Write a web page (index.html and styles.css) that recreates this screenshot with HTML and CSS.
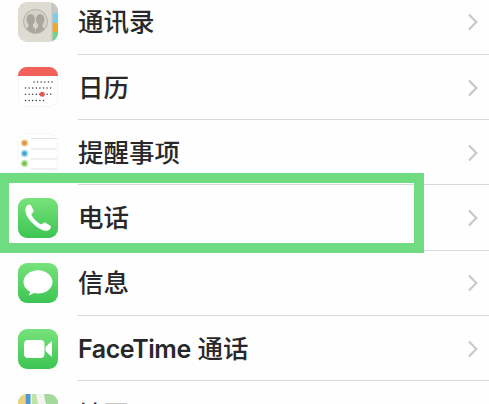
FILE: index.html
```
<!DOCTYPE html>
<html lang="zh-CN">
<head>
<meta charset="utf-8">
<title>设置</title>
<link rel="stylesheet" href="styles.css">
</head>
<body>
<svg class="defs" aria-hidden="true">
  <defs>
    <linearGradient id="green" x1="0" y1="0" x2="0" y2="1"><stop offset="0" stop-color="#78e27b"/><stop offset="1" stop-color="#3cc553"/></linearGradient>
    <clipPath id="tile"><rect width="40" height="40" rx="9"/></clipPath>
    <clipPath id="portrait"><circle cx="17.5" cy="19.5" r="11.5"/></clipPath>
    <symbol id="chevron" viewBox="0 0 12 18"><path d="M2 1.5 9.3 9 2 16.5" fill="none" stroke="#c8c8cb" stroke-width="2.2"/></symbol>
  </defs>
</svg>
<main class="list">
  <div class="row">
    <svg class="icon" viewBox="0 0 40 40"><g clip-path="url(#tile)">
      <rect width="40" height="40" fill="#dedbd2"/>
      <path d="M34 0h6v12h-6z" fill="#c9c7c5"/><path d="M34.5 11h5.5v10h-5.5z" fill="#7ccdec"/><path d="M34.5 21h5.5v9h-5.5z" fill="#f2a72c"/><path d="M34.5 30h5.5v10h-5.5z" fill="#70d587"/>
      <path d="M34 0v40" stroke="#c2beb5" stroke-width="1"/>
      <circle cx="17.5" cy="19.5" r="12" fill="#d6d3ca" stroke="#b4b0a8" stroke-width="1"/>
      <g fill="#aaa69f" clip-path="url(#portrait)"><ellipse cx="12.8" cy="17.500" rx="4.200" ry="5.500"/><ellipse cx="22.200" cy="17.500" rx="4.200" ry="5.500"/><path d="M10.500 21h4.500v4q2.500 1 2.500 3v4H5c0-5 3-5 5.500-7z"/><path d="M20 21h4.500v4c2.500 2 5.500 2 5.500 7H17.900v-4q0-2 2.100-3z"/></g>
    </g></svg>
    <div class="body"><span class="label">通讯录</span><svg class="chevron"><use href="#chevron"/></svg></div>
  </div>
  <div class="row">
    <svg class="icon" viewBox="0 0 40 40">
      <rect x=".5" y=".5" width="39" height="39" rx="8.500" fill="#fff" stroke="#eee" stroke-width=".6"/>
      <path d="M0 9V8a9 9 0 0 1 9-8h22a9 9 0 0 1 9 8v1z" fill="#f06159"/>
      <g fill="none" stroke="#34383b" stroke-width="1.500" stroke-linecap="round" stroke-dasharray="0 3.600"><path d="M16 15h18.500M7.500 21h26M7.500 27.200h26M7.500 33.500h18.500"/></g>
      <circle cx="24.200" cy="27.200" r="2.500" fill="#e85850"/>
    </svg>
    <div class="body"><span class="label">日历</span><svg class="chevron"><use href="#chevron"/></svg></div>
  </div>
  <div class="row">
    <svg class="icon" viewBox="0 0 40 40">
      <rect x=".5" y=".5" width="39" height="39" rx="8.500" fill="#fff" stroke="#f0f0f0" stroke-width=".6"/>
      <path d="M13 5.500h26M13 16h26M13 26h26M13 36h26" stroke="#dedede" stroke-width=".9"/>
      <g stroke-width="1.500"><circle cx="6.500" cy="10" r="3" fill="#db9540" stroke="#f5d0a0"/><circle cx="6.500" cy="20.500" r="3" fill="#43a7d2" stroke="#a4dcf3"/><circle cx="6.500" cy="30.500" r="3" fill="#7dbd59" stroke="#c4eaaa"/></g>
    </svg>
    <div class="body"><span class="label">提醒事项</span><svg class="chevron"><use href="#chevron"/></svg></div>
  </div>
  <div class="row">
    <svg class="icon" viewBox="0 0 40 40"><rect width="40" height="40" rx="9" fill="url(#green)"/>
      <path d="M8.300 8.500c1-1.500 3-2.800 4.500-1.200l2.600 4.700c.8 1.600-.6 2.700-1.800 3.800-.7.800 1.200 4 3.800 6.500 2.400 2.300 5.500 4.500 6.600 3.900 1.200-1.200 2.300-2.200 3.900-1.200l4.200 2.500c1.600 1.100.7 2.900-.5 3.900-2.200 2-6 1.800-10.800-1.200C13.500 25.500 4.500 15.500 8.300 8.500z" fill="#fff"/>
    </svg>
    <div class="body"><span class="label">电话</span><svg class="chevron"><use href="#chevron"/></svg></div>
  </div>
  <div class="row">
    <svg class="icon" viewBox="0 0 40 40"><rect width="40" height="40" rx="9" fill="url(#green)"/>
      <path d="M20 7.200c8 0 14.500 5.200 14.500 11.700S28 30.500 20 30.500c-1.500 0-3-.2-4.300-.5-1.300 1.200-3.200 2-5.500 2.200 1.300-1 1.900-2.200 1.900-3.600C8 26.500 5.500 23 5.500 18.900 5.500 12.400 12 7.200 20 7.200z" fill="#fff"/>
    </svg>
    <div class="body"><span class="label">信息</span><svg class="chevron"><use href="#chevron"/></svg></div>
  </div>
  <div class="row">
    <svg class="icon" viewBox="0 0 40 40"><rect width="40" height="40" rx="9" fill="url(#green)"/>
      <rect x="6" y="11" width="20.500" height="18" rx="4" fill="#fff"/><path d="M27.500 18 33 12.800q1-.8 1 .5v13.400q0 1.300-1 .5L27.500 22z" fill="#fff"/>
    </svg>
    <div class="body"><span class="label"><span class="latin">FaceTime</span> 通话</span><svg class="chevron"><use href="#chevron"/></svg></div>
  </div>
  <div class="row">
    <svg class="icon" viewBox="0 0 40 40"><g clip-path="url(#tile)">
      <rect width="40" height="40" fill="#eeeee5"/><path d="M0 0h7v40H0z" fill="#f3d17c"/><path d="M0 0h6L0 8z" fill="#b6dfa0"/><path d="M7.500 0h5v40h-5z" fill="#4d99d6"/><path d="M14 0h5l13 20v20H14z" fill="#bee5a5"/><path d="M26 0h14v27C33 20 27 13 26 0z" fill="#a3d99b"/><path d="M18 0h8c1 12 5 19 14 24v7C25 23 20 14 18 0z" fill="#f5f3ef"/></g>
    </svg>
    <div class="body"><span class="label">地图</span><svg class="chevron"><use href="#chevron"/></svg></div>
  </div>
  <div class="highlight"></div>
</main>
</body>
</html>
```
FILE: styles.css
```
html, body {
  margin: 0;
  height: 404px;
  overflow: hidden;
  background: #fefefe;
}

.defs {
  position: absolute;
  width: 0;
  height: 0;
}

.list {
  position: relative;
  height: 404px;
  overflow: hidden;
  display: flex;
  flex-direction: column;
  font-family: "Inter", "Noto Sans CJK SC", sans-serif;
  font-size: 25.5px;
  font-weight: 500;
  color: #28282a;
}

.row {
  flex: 0 0 65.3px;
  display: flex;
  align-items: center;
  padding-left: 18px;
  box-sizing: border-box;
}

.row:first-child {
  margin-top: -10.6px;
}

.icon {
  width: 40px;
  height: 40px;
  flex: none;
}

.body {
  flex: 1;
  align-self: stretch;
  display: flex;
  align-items: center;
  justify-content: space-between;
  margin-left: 20px;
  padding-top: 1.4px;
  padding-right: 10px;
  border-bottom: 1px solid #d8d8da;
}

.label {
  line-height: 38px;
  white-space: nowrap;
}

.latin {
  font-size: 25px;
  font-weight: 560;
  letter-spacing: -0.45px;
}

.chevron {
  width: 12px;
  height: 18px;
}

.row:last-of-type .label,
.row:nth-child(7) .label {
  padding-top: 2px;
}

.highlight {
  position: absolute;
  left: 0;
  top: 173px;
  width: 424px;
  height: 80px;
  box-sizing: border-box;
  border: 10px solid #70dc82;
  border-left-width: 9px;
}
```
